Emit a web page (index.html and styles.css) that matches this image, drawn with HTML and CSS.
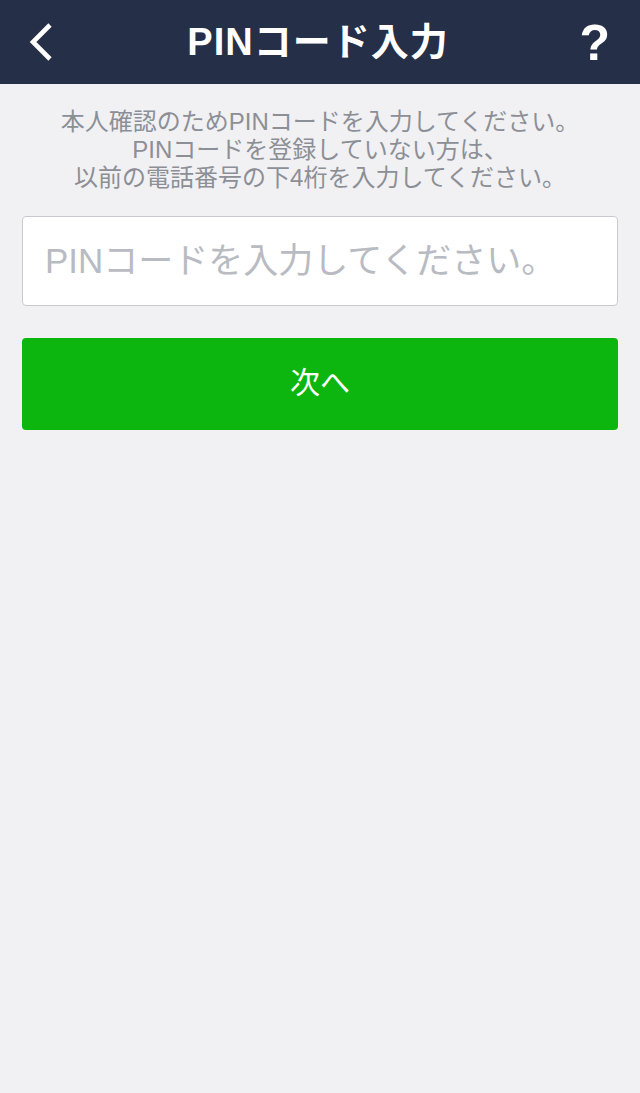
FILE: index.html
```html
<!DOCTYPE html>
<html lang="ja">
<head>
<meta charset="utf-8">
<title>PINコード入力</title>
<link rel="stylesheet" href="styles.css">
</head>
<body>
<header class="navbar">
  <button class="nav-back" aria-label="戻る">
    <svg width="30" height="40" viewBox="0 0 30 40"><polyline points="22,3 5,20 22,37" fill="none" stroke="#ffffff" stroke-width="4.6" stroke-linecap="butt" stroke-linejoin="miter"/></svg>
  </button>
  <h1 class="nav-title">PINコード入力</h1>
  <button class="nav-help" aria-label="ヘルプ">?</button>
</header>
<main class="content">
  <p class="desc">本人確認のためPINコードを入力してください。<br>PINコードを登録していない方は、<br>以前の電話番号の下4桁を入力してください。</p>
  <input class="pin-input" type="text" placeholder="PINコードを入力してください。">
  <button class="next-btn">次へ</button>
</main>
</body>
</html>
```
FILE: styles.css
```css
html, body {
  margin: 0;
  padding: 0;
}
body {
  background: #f1f1f3;
  font-family: "Liberation Sans", "Noto Sans CJK JP", sans-serif;
  width: 640px;
  min-height: 1093px;
}
.navbar {
  height: 84px;
  background: #252f48;
  display: flex;
  align-items: center;
  justify-content: space-between;
  padding: 0 26px 0 26px;
  box-sizing: border-box;
}
.nav-back {
  background: none;
  border: 0;
  padding: 0;
  width: 40px;
  height: 40px;
  display: flex;
  align-items: center;
  justify-content: flex-start;
  margin-left: 2px;
}
.nav-title {
  margin: 0 0 0 -2px;
  color: #ffffff;
  font-size: 38px;
  font-weight: bold;
  letter-spacing: 1px;
  line-height: 1;
}
.nav-help {
  background: none;
  border: 0;
  padding: 0;
  color: #ffffff;
  font-family: "Liberation Sans", sans-serif;
  font-weight: bold;
  font-size: 50px;
  line-height: 1;
  width: 40px;
  text-align: right;
  margin-top: 2px;
  margin-right: 4px;
}
.content {
  display: flex;
  flex-direction: column;
  padding: 24px 22px 0 22px;
}
.desc {
  margin: 0;
  text-align: center;
  color: #8c8f96;
  font-size: 24px;
  line-height: 28px;
}
.pin-input {
  margin-top: 24px;
  height: 90px;
  box-sizing: border-box;
  border: 1px solid #c9cacf;
  border-radius: 4px;
  background: #ffffff;
  padding: 0 22px;
  font-family: "Liberation Sans", "Noto Sans CJK JP", sans-serif;
  font-size: 35px;
  color: #333;
  outline: none;
}
.pin-input::placeholder {
  color: #b8bbc2;
}
.next-btn {
  margin-top: 32px;
  height: 92px;
  border: 0;
  border-radius: 4px;
  background: #0cb60e;
  color: #ffffff;
  font-family: "Liberation Sans", "Noto Sans CJK JP", sans-serif;
  font-size: 30px;
  padding: 0 0 8px 0;
}
```
